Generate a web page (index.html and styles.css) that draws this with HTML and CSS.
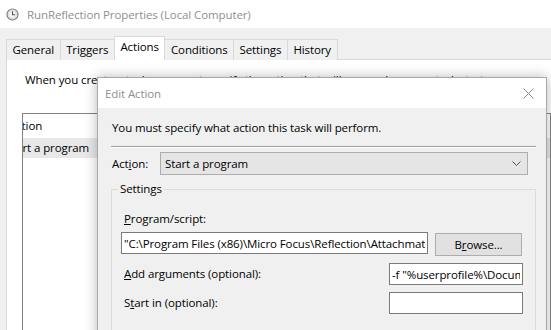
FILE: index.html
```html
<!DOCTYPE html>
<html>
	<head>
		<meta charset="UTF-8">
		<link rel="stylesheet" href="styles.css">
	</head>
	<body>
		<div class="window">
			<div class="titlebar">
				<svg class="clock" width="13" height="13" viewBox="0 0 13 13">
					<circle cx="6.5" cy="6.5" r="5.5" fill="#f4f4f4" stroke="#7d7d7d" stroke-width="1.2"/>
					<circle cx="6.5" cy="6.5" r="4" fill="none" stroke="#d0d0d0" stroke-width="0.8"/>
					<path d="M6.5 3.2 V6.8 H9.2" fill="none" stroke="#555" stroke-width="1.1"/>
				</svg>
				<span>RunReflection Properties (Local Computer)</span>
			</div>
			<div class="frame">
				<div class="tabs">
					<div class="tab">General</div>
					<div class="tab">Triggers</div>
					<div class="tab active">Actions</div>
					<div class="tab">Conditions</div>
					<div class="tab">Settings</div>
					<div class="tab">History</div>
				</div>
				<div class="panel">
					<p class="intro">When you create a task, you must specify the action that will occur when your task starts.</p>
					<div class="listbox">
						<div class="list-head"><span class="col-action">Action</span></div>
						<div class="list-row selected"><span class="col-action">Start a program</span></div>
					</div>
				</div>
			</div>
		</div>

		<div class="dialog">
			<div class="dialog-title">
				<span>Edit Action</span>
				<svg class="close" width="11" height="11" viewBox="0 0 11 11">
					<path d="M0.5 0.5 L10.5 10.5 M10.5 0.5 L0.5 10.5" stroke="#8a8a8a" stroke-width="1"/>
				</svg>
			</div>
			<div class="dialog-body">
				<p class="message">You must specify what action this task will perform.</p>
				<div class="separator"></div>
				<div class="action-row">
					<span class="action-label">Act<u>i</u>on:</span>
					<div class="combo">
						<span>Start a program</span>
						<svg width="9" height="5" viewBox="0 0 9 5">
							<path d="M0.5 0.5 L4.5 4.5 L8.5 0.5" fill="none" stroke="#555" stroke-width="1"/>
						</svg>
					</div>
				</div>
				<fieldset class="group">
					<legend>Settings</legend>
					<div class="field-label"><u>P</u>rogram/script:</div>
					<div class="program-row">
						<input class="textbox program" type="text" value="&quot;C:\Program Files (x86)\Micro Focus\Reflection\Attachmate.Emulation.Frame.exe&quot;">
						<button class="browse" type="button">B<u>r</u>owse...</button>
					</div>
					<div class="option-row">
						<span class="field-label"><u>A</u>dd arguments (optional):</span>
						<input class="textbox small" type="text" value="-f &quot;%userprofile%\Documents\Micro Focus\Reflection\session.rd3x&quot;">
					</div>
					<div class="option-row">
						<span class="field-label">S<u>t</u>art in (optional):</span>
						<input class="textbox small" type="text" value="">
					</div>
				</fieldset>
			</div>
		</div>
	</body>
</html>
```

FILE: styles.css
```css
body {
	margin: 0;
	width: 551px;
	height: 330px;
	overflow: hidden;
	position: relative;
	background-color: #f0f0f0;
	font-family: 'Open Sans', 'Noto Sans', sans-serif;
	font-size: 11.5px;
	letter-spacing: -0.1px;
	color: #000;
}

p {
	margin: 0;
}

/* back window */

.titlebar {
	height: 28px;
	display: flex;
	align-items: center;
	gap: 8px;
	padding-left: 6px;
	background-color: #fff;
	color: #8f8f8f;
}

.frame {
	padding: 9px 0 0 6px;
}

.tabs {
	display: flex;
	align-items: flex-end;
	height: 23px;
	margin-bottom: -1px;
	position: relative;
	z-index: 1;
}

.tab {
	height: 20px;
	line-height: 19px;
	padding: 0 5.5px;
	border: 1px solid #d9d9d9;
	border-bottom: none;
	margin-right: -1px;
	background-color: #f0f0f0;
}

.tab.active {
	height: 23px;
	line-height: 19px;
	background-color: #fff;
}

.panel {
	height: 280px;
	padding: 12px 0 0 18px;
	border-top: 1px solid #d9d9d9;
	border-left: 1px solid #d9d9d9;
	background-color: #fff;
}

.intro {
	line-height: 16px;
	white-space: nowrap;
}

.listbox {
	margin: 25px 0 0 -3px;
	width: 527px;
	height: 240px;
	border: 1px solid #828282;
	overflow: hidden;
}

.list-head,
.list-row {
	display: flex;
	white-space: nowrap;
}

.list-head {
	height: 22px;
	line-height: 24px;
	margin-bottom: 2px;
}

.list-row {
	height: 20px;
	line-height: 20px;
}

.list-head .col-action {
	margin-left: -14px;
}

.list-row .col-action {
	margin-left: -17px;
}

.selected {
	background-color: #e8e8e8;
}

/* edit action dialog */

.dialog {
	position: absolute;
	left: 97px;
	top: 77px;
	width: 450px;
	height: 270px;
	box-sizing: border-box;
	border: 1px solid #a8a8a8;
	background-color: #f0f0f0;
	box-shadow: 0 0 12px rgba(0,0,0,0.28);
}

.dialog-title {
	height: 30px;
	display: flex;
	align-items: center;
	justify-content: space-between;
	padding: 0 12px 0 7px;
	background-color: #fff;
	color: #8f8f8f;
}

.dialog-body {
	padding: 12px 10px 0 13px;
}

.message {
	line-height: 16px;
	padding-left: 1px;
}

.separator {
	margin-top: 10px;
	border-top: 1px solid #a0a0a0;
	border-bottom: 1px solid #fff;
}

.action-row {
	display: flex;
	align-items: center;
	margin-top: 4px;
}

.action-label {
	width: 48px;
	padding-left: 1px;
}

.combo {
	width: 368px;
	height: 23px;
	box-sizing: border-box;
	display: flex;
	align-items: center;
	justify-content: space-between;
	padding: 0 6px 0 4px;
	border: 1px solid #adadad;
	background-color: #e5e5e5;
}

.group {
	margin: 6px 0 0 0;
	padding: 0 12px 0 9px;
	height: 160px;
	border: 1px solid #dcdcdc;
}

.group legend {
	margin-left: -3px;
	padding: 0 2px;
	line-height: 16px;
}

.field-label {
	padding-left: 3px;
	line-height: 16px;
}

.group > .field-label {
	margin-top: 14px;
}

.program-row {
	display: flex;
	align-items: flex-start;
	justify-content: space-between;
	margin-top: 5px;
}

.textbox {
	height: 22px;
	box-sizing: border-box;
	margin: 0;
	padding: 0 2px;
	border: 1px solid #7a7a7a;
	background-color: #fff;
	font-family: 'Open Sans', 'Noto Sans', sans-serif;
	font-size: 11.5px;
	letter-spacing: -0.1px;
	color: #000;
	outline: none;
}

.textbox.program {
	width: 307px;
}

.textbox.small {
	width: 134px;
}

.browse {
	width: 87px;
	height: 23px;
	margin: 1px 1px 0 0;
	padding: 0;
	border: 1px solid #adadad;
	background-color: #e1e1e1;
	font-family: 'Open Sans', 'Noto Sans', sans-serif;
	font-size: 11.5px;
	letter-spacing: -0.1px;
	color: #000;
}

.option-row {
	display: flex;
	align-items: center;
	justify-content: space-between;
	margin-top: 7px;
}
```
